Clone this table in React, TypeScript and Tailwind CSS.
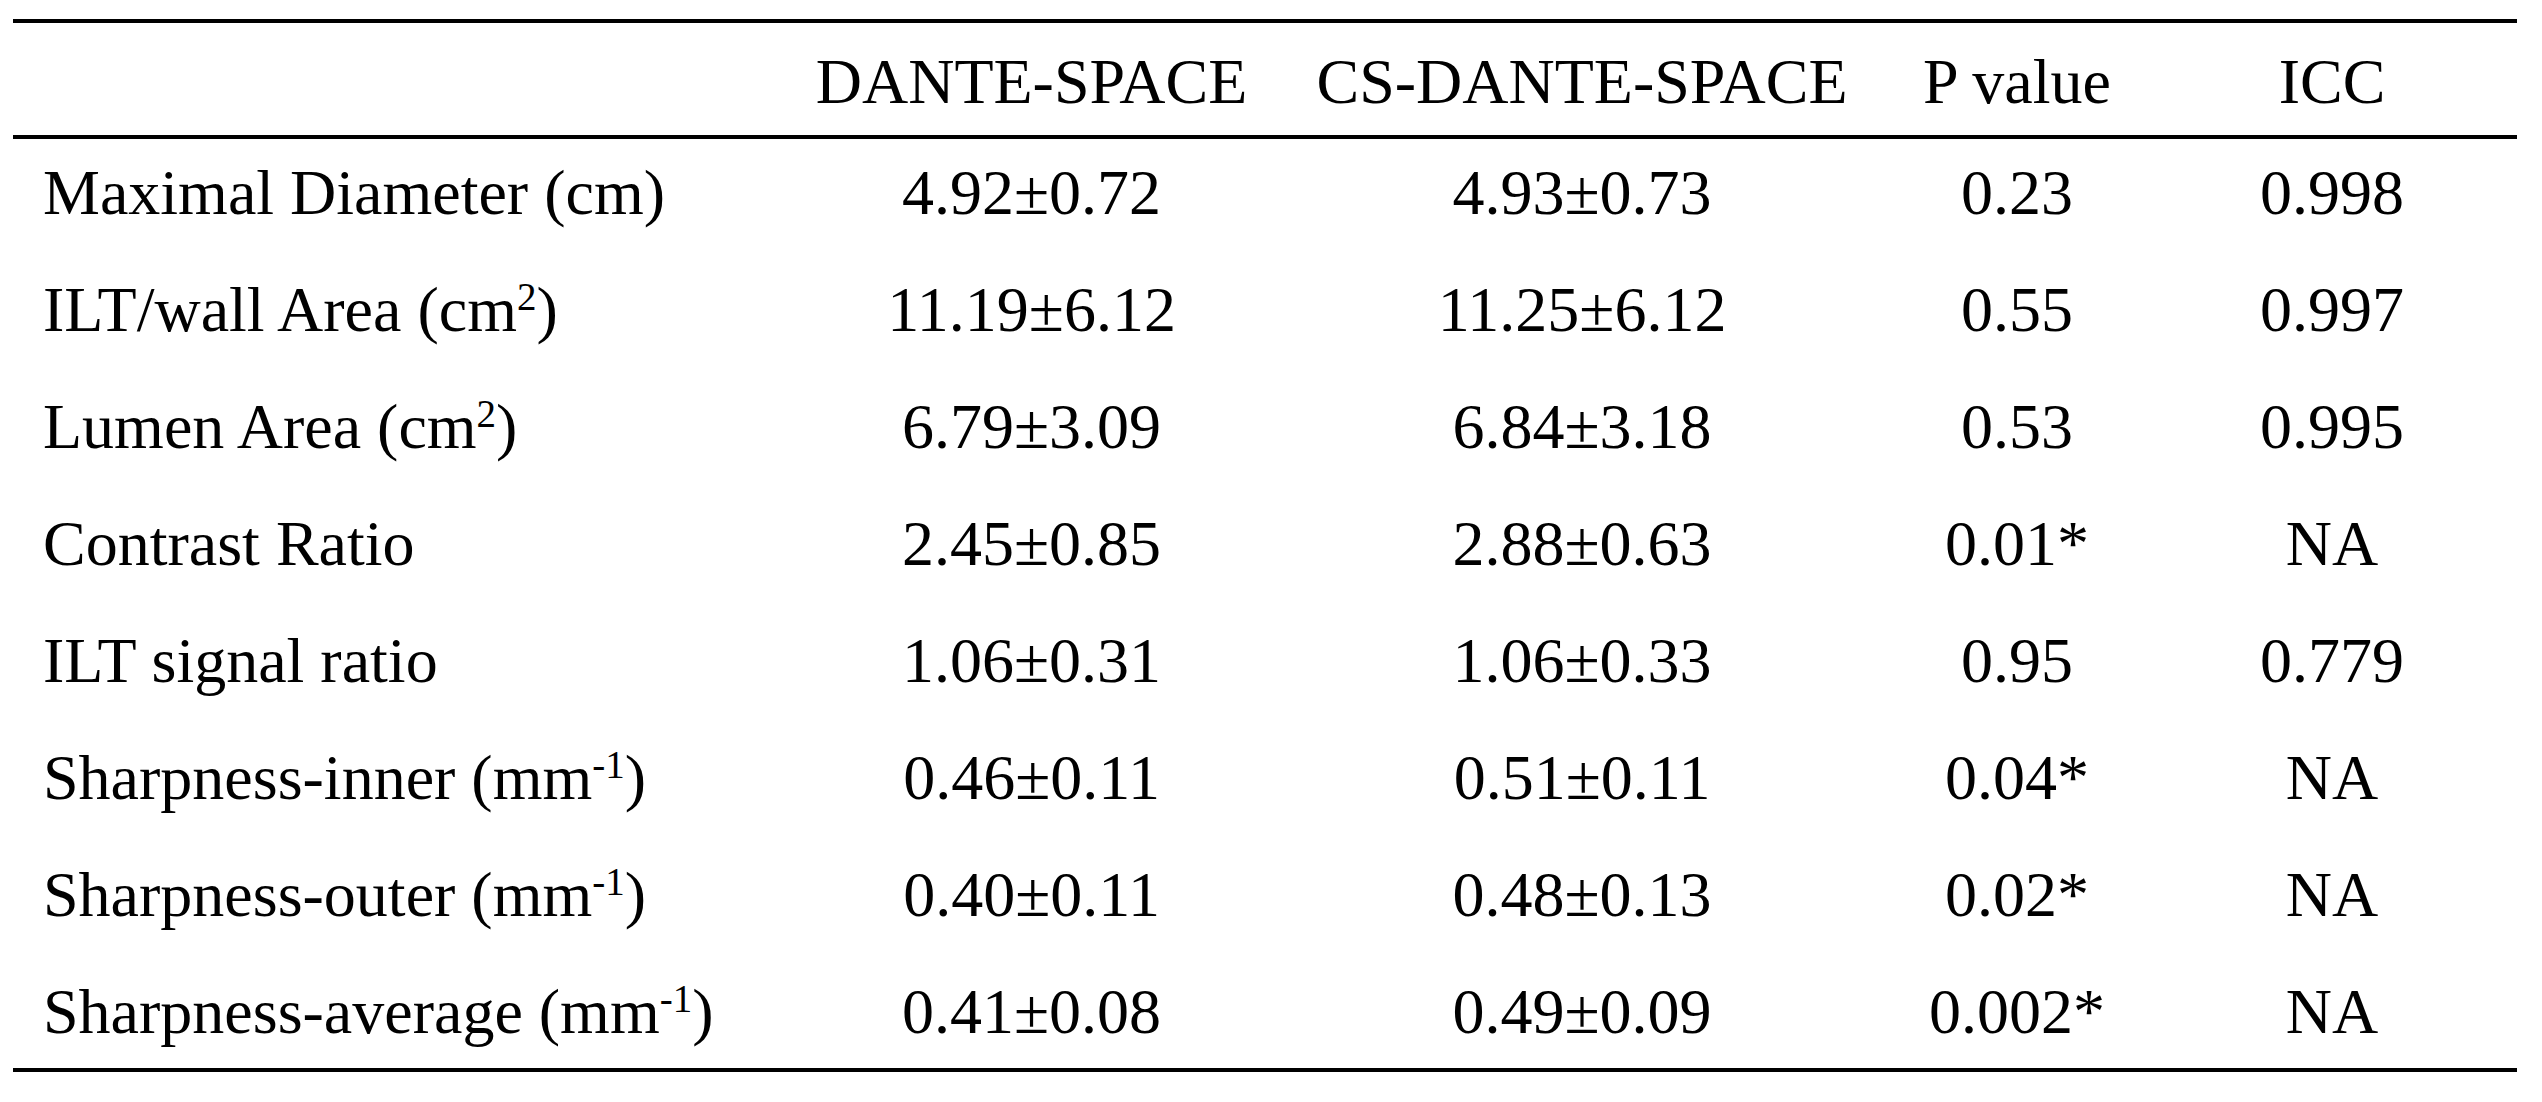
import type { ReactNode } from "react";

type Row = {
    label: ReactNode;
    dante: string;
    cs: string;
    p: string;
    icc: string;
};

const Sup = ({ children }: { children: ReactNode }) => (
    <sup className="text-[39px] top-[-21px]">{children}</sup>
);

const rows: Row[] = [
    { label: <>Maximal Diameter (cm)</>, dante: "4.92±0.72", cs: "4.93±0.73", p: "0.23", icc: "0.998" },
    { label: <>ILT/wall Area (cm<Sup>2</Sup>)</>, dante: "11.19±6.12", cs: "11.25±6.12", p: "0.55", icc: "0.997" },
    { label: <>Lumen Area (cm<Sup>2</Sup>)</>, dante: "6.79±3.09", cs: "6.84±3.18", p: "0.53", icc: "0.995" },
    { label: <>Contrast Ratio</>, dante: "2.45±0.85", cs: "2.88±0.63", p: "0.01*", icc: "NA" },
    { label: <>ILT signal ratio</>, dante: "1.06±0.31", cs: "1.06±0.33", p: "0.95", icc: "0.779" },
    { label: <>Sharpness-inner (mm<Sup>-1</Sup>)</>, dante: "0.46±0.11", cs: "0.51±0.11", p: "0.04*", icc: "NA" },
    { label: <>Sharpness-outer (mm<Sup>-1</Sup>)</>, dante: "0.40±0.11", cs: "0.48±0.13", p: "0.02*", icc: "NA" },
    { label: <>Sharpness-average (mm<Sup>-1</Sup>)</>, dante: "0.41±0.08", cs: "0.49±0.09", p: "0.002*", icc: "NA" },
];

const cols = "grid grid-cols-[773px_491px_610px_260px_370px]";

export default function App() {
    return (
        <div className="w-[2542px] h-[1102px] bg-white text-black pt-[19px] pl-[13px] font-['Liberation_Serif','Times_New_Roman',serif] text-[64px] leading-[64px]">
            <div className="w-[2504px] border-t-4 border-b-4 border-black">
                {/* header */}
                <div className={`${cols} h-[116px] pt-[27px] border-b-4 border-black`}>
                    <div />
                    <div className="text-center whitespace-nowrap">DANTE-SPACE</div>
                    <div className="text-center whitespace-nowrap">CS-DANTE-SPACE</div>
                    <div className="text-center whitespace-nowrap">P value</div>
                    <div className="text-center whitespace-nowrap">ICC</div>
                </div>
                {/* body */}
                {rows.map((r, i) => (
                    <div
                        key={i}
                        className={`${cols} pt-[22px] ${i === rows.length - 1 ? "h-[110px]" : "h-[117px]"}`}
                    >
                        <div className="pl-[30px] whitespace-nowrap">{r.label}</div>
                        <div className="text-center whitespace-nowrap">{r.dante}</div>
                        <div className="text-center whitespace-nowrap">{r.cs}</div>
                        <div className="text-center whitespace-nowrap">{r.p}</div>
                        <div className="text-center whitespace-nowrap">{r.icc}</div>
                    </div>
                ))}
            </div>
        </div>
    );
}
